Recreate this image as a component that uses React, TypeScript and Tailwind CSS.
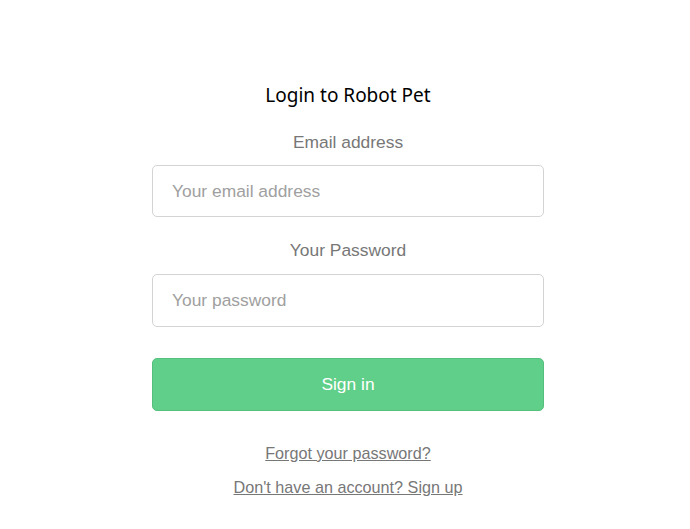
export default function App() {
  return (
    <div className="min-h-[529px] bg-white font-['Liberation_Sans',Arial,sans-serif]">
      <div className="ml-[152px] w-[392px] pt-[81px] flex flex-col items-stretch">
        <h1 className="text-center text-[19px] leading-[28px] text-black font-normal font-['Noto_Sans',sans-serif]">
          Login to Robot Pet
        </h1>

        <label className="mt-[21px] text-center text-[17.4px] leading-[24px] text-[#777]">
          Email address
        </label>
        <input
          type="email"
          placeholder="Your email address"
          className="mt-[11px] h-[52px] w-full rounded-[5px] border border-[#d4d4d4] px-[19px] text-[17.4px] text-[#333] placeholder:text-[#a0a0a0] outline-none"
        />

        <label className="mt-[21px] text-center text-[17.4px] leading-[24px] text-[#777]">
          Your Password
        </label>
        <input
          type="password"
          placeholder="Your password"
          className="mt-[12px] h-[53px] w-full rounded-[5px] border border-[#d4d4d4] px-[19px] text-[17.4px] text-[#333] placeholder:text-[#a0a0a0] outline-none"
        />

        <button className="mt-[31px] h-[53px] w-full rounded-[5px] border border-[#55c07e] bg-[#5fcf89] text-[17.4px] text-white">
          Sign in
        </button>

        <a
          href="#"
          className="mt-[30px] self-center text-[16.2px] leading-[24px] text-[#777] underline"
        >
          Forgot your password?
        </a>
        <a
          href="#"
          className="mt-[10px] self-center text-[16.2px] leading-[24px] text-[#777] underline"
        >
          Don't have an account? Sign up
        </a>
      </div>
    </div>
  );
}
